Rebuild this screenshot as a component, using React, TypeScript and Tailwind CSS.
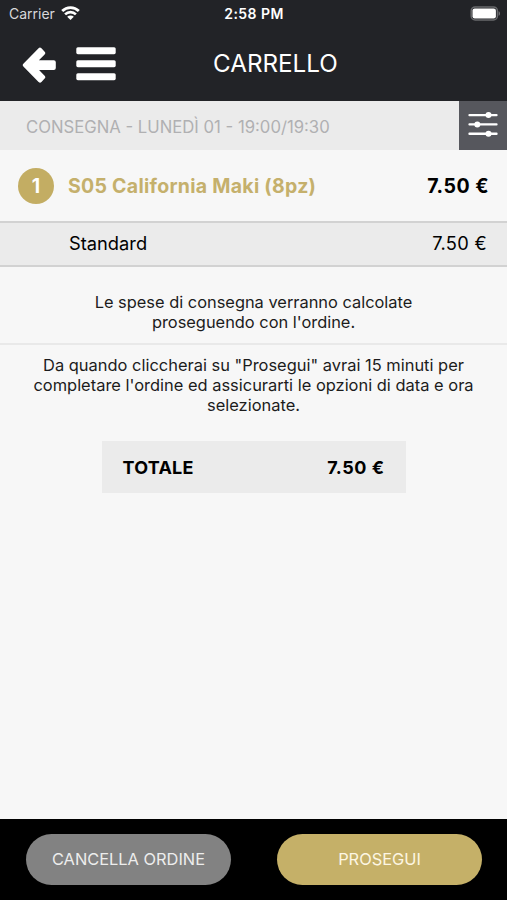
import { clsx } from 'clsx';

const items = [
  {
    quantity: 1,
    name: 'S05 California Maki (8pz)',
    price: '7.50 €',
    options: [{ name: 'Standard', price: '7.50 €' }],
  },
];

function WifiIcon() {
  return (
    <svg width="19" height="15" viewBox="0 0 19 15" fill="none" stroke="#fff">
      <path d="M1.2 5a11.8 11.8 0 0 1 16.6 0" strokeWidth="2.8" />
      <path d="M4.1 8.4a7.6 7.6 0 0 1 10.8 0" strokeWidth="2.6" />
      <path d="M9.5 14 6.2 10.8a4.6 4.6 0 0 1 6.6 0Z" fill="#fff" stroke="none" />
    </svg>
  );
}

function BatteryIcon() {
  return (
    <svg width="31" height="15" viewBox="0 0 31 15">
      <rect x="1.2" y="0.9" width="26.2" height="13" rx="4" fill="none" stroke="#68696c" strokeWidth="1.5" />
      <rect x="2.5" y="2.4" width="23.4" height="10" rx="2.2" fill="#fff" />
      <path d="M28.6 5.2c1.8.6 1.8 4 0 4.6Z" fill="#77787b" />
    </svg>
  );
}

function BackIcon() {
  return (
    <svg width="34" height="37" viewBox="0 0 34 37" fill="#fff" stroke="#fff" strokeWidth="4" strokeLinejoin="round">
      <path d="M2.8 19.1 18 3.6 21.2 7 12.2 16.2H31.8V22H12.2L21.2 31.2 18 34.6Z" />
    </svg>
  );
}

function MenuIcon() {
  return (
    <svg width="40" height="34" viewBox="0 0 40 34" fill="#fff">
      <rect x="0.3" y="0.2" width="39.4" height="7" rx="1.6" />
      <rect x="0.3" y="13.2" width="39.4" height="7" rx="1.6" />
      <rect x="0.3" y="26.2" width="39.4" height="7" rx="1.6" />
    </svg>
  );
}

function SlidersIcon() {
  return (
    <svg width="30" height="26" viewBox="0 0 30 26" fill="#fff">
      <rect x="0.4" y="2.9" width="29.2" height="2.4" rx="1" />
      <rect x="0.4" y="12.2" width="29.2" height="2.4" rx="1" />
      <rect x="0.4" y="21.6" width="29.2" height="2.4" rx="1" />
      <circle cx="20.5" cy="4.1" r="3" />
      <circle cx="9.3" cy="13.4" r="3" />
      <circle cx="20.5" cy="22.8" r="3" />
    </svg>
  );
}

function FooterButton({ label, primary }: { label: string; primary?: boolean }) {
  return (
    <button
      className={clsx(
        'h-[51px] w-[205px] rounded-full text-[16.4px]',
        primary ? 'bg-[#c5b068] text-[#fdf6e3]' : 'bg-[#828282] text-[#ededed]'
      )}
    >
      {label}
    </button>
  );
}

export default function App() {
  return (
    <div className="flex h-[900px] w-full flex-col overflow-hidden bg-[#f7f7f7] font-[Inter,sans-serif] text-black">
      <header className="h-[101px] shrink-0 bg-[#222327] text-white">
        <div className="grid h-[27px] grid-cols-3 items-center pl-[9px] pr-[8px]">
          <div className="flex items-center gap-[6px]">
            <span className="text-[14px] text-[#d8d8da]">Carrier</span>
            <WifiIcon />
          </div>
          <span className="text-center text-[14px] font-semibold tracking-[0.45px]">2:58 PM</span>
          <div className="-mr-[2px] flex justify-end">
            <BatteryIcon />
          </div>
        </div>
        <div className="flex h-[74px] items-center pl-[22px]">
          <div className="flex w-[191px] items-center gap-5">
            <button aria-label="Indietro">
              <BackIcon />
            </button>
            <button aria-label="Menu">
              <MenuIcon />
            </button>
          </div>
          <h1 className="text-[24.2px]">CARRELLO</h1>
        </div>
      </header>

      <div className="flex h-[49px] shrink-0 bg-[#ebebeb]">
        <p className="flex flex-1 items-center pl-[26px] pt-[4px] text-[16.7px] text-[#b0b0b2]">
          CONSEGNA - LUNEDÌ 01 - 19:00/19:30
        </p>
        <button aria-label="Opzioni" className="flex w-12 items-center justify-center bg-[#56575d] pb-[3px]">
          <SlidersIcon />
        </button>
      </div>

      <main className="flex-1">
        {items.map((item) => (
          <section key={item.name}>
            <div className="flex h-[71px] items-center pl-[18px] pr-[18px] text-[19.5px] font-bold">
              <span className="mr-[14px] flex size-9 items-center justify-center rounded-full bg-[#c3ad63] pt-[2px] text-white">
                {item.quantity}
              </span>
              <span className="flex-1 pt-[2px] tracking-[0.28px] text-[#c5b06c]">{item.name}</span>
              <span className="pt-[2px] tracking-[0.5px]">{item.price}</span>
            </div>
            {item.options.map((option) => (
              <div
                key={option.name}
                className="flex h-[46px] items-center justify-between border-y-2 border-[#d2d2d2] bg-[#ebebeb] pb-px pl-[69px] pr-[20px] text-[18.3px]"
              >
                <span>{option.name}</span>
                <span className="tracking-[0.3px]">{option.price}</span>
              </div>
            ))}
          </section>
        ))}

        <p className="border-b-2 border-[#e9e9e9] pb-[10px] pt-[25px] text-center text-[16.4px] leading-[20.25px] text-[#1c1c1c]">
          Le spese di consegna verranno calcolate
          <br />
          proseguendo con l'ordine.
        </p>
        <p className="pt-[10px] text-center text-[16.45px] leading-[20.25px] text-[#1c1c1c]">
          Da quando cliccherai su "Prosegui" avrai 15 minuti per
          <br />
          completare l'ordine ed assicurarti le opzioni di data e ora
          <br />
          selezionate.
        </p>

        <div className="mx-auto mt-[26px] flex h-[52px] w-[304px] items-center justify-between bg-[#ebebeb] pl-[21px] pr-[21px] text-[18px] font-bold">
          <span className="tracking-[0.25px]">TOTALE</span>
          <span className="tracking-[0.5px]">7.50 €</span>
        </div>
      </main>

      <footer className="flex h-[81px] shrink-0 items-center justify-between bg-black pl-[26px] pr-[25px]">
        <FooterButton label="CANCELLA ORDINE" />
        <FooterButton label="PROSEGUI" primary />
      </footer>
    </div>
  );
}
